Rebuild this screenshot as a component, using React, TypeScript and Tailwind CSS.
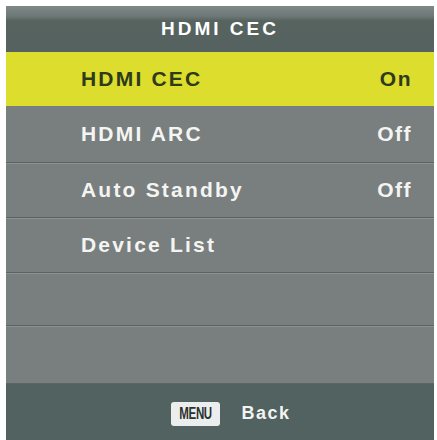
import React from "react";

const font = { fontFamily: '"Liberation Sans", Arial, sans-serif' };

function Row({
  label,
  value,
  h,
  selected,
  sep,
}: {
  label?: string;
  value?: string;
  h: string;
  selected?: boolean;
  sep?: boolean;
}) {
  const base = selected
    ? "bg-[#dcdd2c] text-[#2e3a1c]"
    : "bg-[#797e7f] text-[#f4f5f2]";
  const border = sep
    ? "border-t border-[#5c6264] shadow-[inset_0_1px_0_#8d9293]"
    : "";
  return (
    <div
      className={`${h} ${base} ${border} flex items-center justify-between pl-[75px] pr-[22px] text-[21px] font-bold tracking-[2.2px]`}
    >
      <span>{label}</span>
      <span className="tracking-[1.5px]">{value}</span>
    </div>
  );
}

export default function App() {
  return (
    <div
      className="w-[437px] h-[440px] bg-white pt-[6px] pl-[6px] pr-[3px] overflow-hidden"
      style={font}
    >
      <div className="flex flex-col h-full">
        <div className="h-[46px] flex items-center justify-center bg-[linear-gradient(180deg,#7f8887_0%,#6e7977_22%,#56635f_32%,#55625f_100%)] text-white text-[19px] font-bold tracking-[3px]">
          HDMI CEC
        </div>
        <Row h="h-[54px]" label="HDMI CEC" value="On" selected />
        <Row h="h-[56px]" label="HDMI ARC" value="Off" />
        <Row h="h-[55px]" label="Auto Standby" value="Off" sep />
        <Row h="h-[55px]" label="Device List" sep />
        <Row h="h-[53px]" sep />
        <Row h="h-[58px]" sep />
        <div className="flex-1 bg-[#526260] border-t border-[#5d6665] flex items-center justify-center gap-[21px] pl-[22px] pb-[3px]">
          <div className="w-[49px] h-[24px] rounded-[3px] bg-[#eceeed] flex items-center justify-center text-[#2a3230] mt-[6px] overflow-hidden">
            <span className="inline-block text-[16px] font-bold tracking-[-0.5px] scale-x-[0.72] leading-none">
              MENU
            </span>
          </div>
          <span className="text-[#f2f4f2] text-[18px] font-bold tracking-[1.5px] mt-[6px]">
            Back
          </span>
        </div>
      </div>
    </div>
  );
}
